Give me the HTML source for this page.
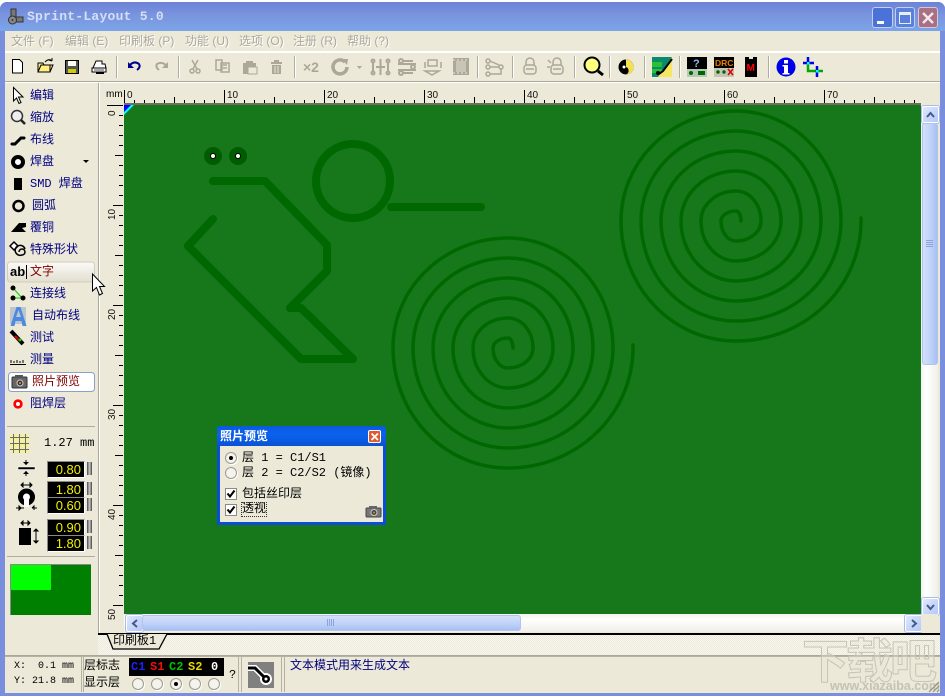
<!DOCTYPE html>
<html><head><meta charset="utf-8"><style>
html,body{margin:0;padding:0;width:945px;height:698px;overflow:hidden;background:#fff}
body{position:relative;font:12px/14px "Liberation Mono","WenQuanYi Zen Hei","Noto Sans CJK SC",monospace;color:#000}
.a{position:absolute}
.t{position:absolute;white-space:nowrap;line-height:14px;font-size:12px}
.n{color:#000080}
.m{color:#aca899;text-shadow:1px 1px 0 #fff;font-family:"Liberation Sans","WenQuanYi Zen Hei","Noto Sans CJK SC",sans-serif}
.sep{position:absolute;top:56px;width:1px;height:22px;background:#b0ad9f;border-right:1px solid #fff}
.ins{position:absolute;background:#000;color:#f0f000;font:13px/15px "Liberation Sans",sans-serif;text-align:right;left:47px;width:33px;height:15px;padding-right:3px;border:1px solid #fff;border-top-color:#888;border-left-color:#888}
.spin{position:absolute;left:87px;width:5px;height:13px;background:linear-gradient(90deg,#444,#ccc,#444)}
.rad{position:absolute;width:10px;height:10px;border-radius:50%;background:#f4f3ec;border:1px solid #9d9b90;box-shadow:1px 1px 0 #fff}
.rad.on::after{content:"";position:absolute;left:3px;top:3px;width:4px;height:4px;border-radius:50%;background:#000}
.chk{position:absolute;width:10px;height:10px;background:#fff;border:1px solid #8d8b80}
svg{position:absolute;overflow:visible}
.hbtn{position:absolute;width:15px;height:15px;border-radius:2px;background:linear-gradient(135deg,#dfe8fc,#b4c8f6);border:1px solid #fff;outline:1px solid #a8bcea}
</style></head><body>
<!-- window -->
<div class="a" style="left:0;top:2px;width:945px;height:694px;background:#7a8ede;border-radius:7px 7px 0 0"></div>
<div class="a" style="left:0;top:2px;width:945px;height:29px;background:linear-gradient(180deg,#6c82d8,#7a94de 45%,#7ba4e8);border-radius:7px 7px 0 0"></div>
<div class="a" style="left:5px;top:31px;width:935px;height:662px;background:#ece9d8"></div>
<!-- title -->
<svg style="left:8px;top:8px" width="16" height="17"><rect x="3" y="1" width="5" height="10" fill="#777" stroke="#333"/><rect x="7" y="9" width="8" height="5" fill="#777" stroke="#333"/><circle cx="4.500" cy="12" r="4" fill="#888" stroke="#333"/><circle cx="4.500" cy="12" r="1" fill="#333"/></svg>
<div class="t" style="left:27px;top:10px;color:#d4dff5;font-size:13px;font-weight:700;letter-spacing:.25px">Sprint-Layout 5.0</div>
<div class="a" style="left:872px;top:7px;width:19px;height:19px;background:#4a72d8;border:1px solid #c0d0f0;border-radius:3px"><div class="a" style="left:4px;top:13px;width:7px;height:3px;background:#fff"></div></div>
<div class="a" style="left:895px;top:7px;width:18px;height:19px;background:#5a80dc;border:1px solid #c0d0f0;border-radius:3px"><div class="a" style="left:3px;top:4px;width:10px;height:8px;border:1px solid #e8eefc;border-top-width:3px"></div></div>
<div class="a" style="left:918px;top:7px;width:18px;height:19px;background:#a86f85;border:1px solid #d8c8d0;border-radius:3px"><svg style="left:3px;top:4px" width="12" height="12"><path d="M1 1L11 11M11 1L1 11" stroke="#f4e8ec" stroke-width="2.400"/></svg></div>
<!-- menu -->
<div class="t m" style="left:11px;top:34px">文件 (F)</div>
<div class="t m" style="left:65px;top:34px">编辑 (E)</div>
<div class="t m" style="left:119px;top:34px">印刷板 (P)</div>
<div class="t m" style="left:185px;top:34px">功能 (U)</div>
<div class="t m" style="left:239px;top:34px">选项 (O)</div>
<div class="t m" style="left:293px;top:34px">注册 (R)</div>
<div class="t m" style="left:347px;top:34px">帮助 (?)</div>
<div class="a" style="left:5px;top:50px;width:935px;height:2px;background:#fff;border-top:1px solid #ece9d8"></div>
<div class="a" style="left:5px;top:81px;width:935px;height:1px;background:#aca899"></div>
<div class="a" style="left:5px;top:82px;width:935px;height:1px;background:#fff"></div>
<!-- toolbar separators -->
<div class="sep" style="left:116px"></div><div class="sep" style="left:178px"></div><div class="sep" style="left:294px"></div><div class="sep" style="left:477px"></div><div class="sep" style="left:512px"></div><div class="sep" style="left:574px"></div><div class="sep" style="left:609px"></div><div class="sep" style="left:644px"></div><div class="sep" style="left:679px"></div><div class="sep" style="left:768px"></div>
<!-- toolbar icons -->
<svg style="left:0;top:0" width="945" height="82">
<path d="M12.500 59.500h7l3 3v10.500h-10z" fill="#fff" stroke="#000"/>
<path d="M38 72V63h5l1 2h6v7zM38 72l3-7h12l-3 7z" fill="#ffee80" stroke="#000"/><path d="M45 62q4-4 7-1M52 61l-3-1M52 61v-3" stroke="#000" fill="none"/>
<rect x="65.500" y="60.500" width="13" height="13" fill="#555" stroke="#000"/><rect x="68" y="61" width="8" height="5" fill="#ffe"/><rect x="68" y="69" width="8" height="4" fill="#cc0"/>
<path d="M93 68l3-7h6v3h3l1 4zM92 68h14v4H92z" fill="#fff" stroke="#000"/><path d="M94 70h10" stroke="#555"/><rect x="96" y="72" width="8" height="2" fill="#000"/>
<path d="M129 66q5-6 10-2q2 3-2 6" stroke="#00008b" stroke-width="2" fill="none"/><path d="M128 62v6h6z" fill="#00008b"/>
<path d="M167 66q-5-5-10-2q-2 3 2 6" stroke="#aca899" stroke-width="2" fill="none"/><path d="M168 62v6h-6z" fill="#aca899"/>
<g stroke="#aca899" fill="none" stroke-width="1.500"><path d="M192 60l5 9M198 60l-5 9"/><circle cx="192" cy="71" r="2"/><circle cx="198" cy="71" r="2"/>
<path d="M216 60h6v10h-6zM221 63h8v9h-8z" fill="#ece9d8"/><path d="M223 65h4M223 68h4"/></g>
<path d="M243 63h3v-2h7v2h3v11h-13z" fill="#aca899"/><rect x="248" y="67" width="9" height="7" fill="#ece9d8" stroke="#aca899"/>
<path d="M271 62h11v2h-11zM272 65h9v9h-9zM274 60h5v2h-5z" fill="#aca899"/><path d="M275 66v7M278 66v7" stroke="#ece9d8"/>
<text x="303" y="72" font-family="Liberation Sans" font-weight="700" font-size="14" fill="#aca899">×2</text>
<path d="M345 62a7 7 0 1 0 2 5" stroke="#aca899" stroke-width="3.500" fill="none"/><path d="M342 59l6 0-1 6z" fill="#aca899"/><path d="M357 66h5l-2.500 3z" fill="#aca899"/>
<g stroke="#aca899" fill="none" stroke-width="2"><circle cx="373" cy="61" r="1.500"/><circle cx="373" cy="73" r="1.500"/><circle cx="388" cy="61" r="1.500"/><circle cx="388" cy="73" r="1.500"/><path d="M373 62v10M388 62v10M376 67h9M380.500 59v16"/>
<circle cx="401" cy="61" r="2"/><circle cx="413" cy="67" r="2"/><circle cx="401" cy="73" r="2"/><path d="M398 64h18M398 70h18M403 61h10M403 73h10"/></g>
<g stroke="#aca899" fill="none" stroke-width="1.500"><path d="M428 60h9v6h-9zM432 75l-7-4h14zM425 62v6M441 62v6"/></g>
<rect x="453" y="58" width="16" height="17" fill="#aca899"/><rect x="456" y="61" width="10" height="11" fill="#c8c5b6"/><path d="M453 60h16M453 73h16" stroke="#ece9d8" stroke-dasharray="2 2"/>
<g stroke="#aca899" fill="none" stroke-width="1.500"><circle cx="488" cy="61" r="2"/><circle cx="488" cy="67" r="2"/><circle cx="488" cy="74" r="2"/><circle cx="501" cy="67" r="2"/><path d="M490 61l9 4M490 67h9M490 74h11v-5"/>
<path d="M526 65v-3a4 4 0 0 1 8 0v3"/><rect x="524" y="65" width="12" height="9" rx="3"/><path d="M526 69h8"/>
<path d="M553 65v-3a4 4 0 0 1 8 0v3"/><rect x="551" y="65" width="12" height="9" rx="3"/><path d="M548 60l3 3M547 67h3M553 69h8"/></g>
<circle cx="592" cy="65" r="7.500" fill="#ffff80" stroke="#000" stroke-width="2"/><path d="M598 71l5 4" stroke="#000" stroke-width="3"/>
<circle cx="626" cy="67" r="7.500" fill="#000"/><path d="M626 59.500a7.500 7.500 0 0 1 0 15a4 4 0 0 0 0-7.500z" fill="#f5e050"/><circle cx="624" cy="67" r="1.500" fill="#fff"/>
<rect x="652" y="57" width="20" height="20" fill="#0c8a70"/><path d="M652 62h10v5h-10zM652 69h10v4h-10z" fill="#2ac030"/><path d="M672 57l-14 20h14z" fill="#f5e860"/><path d="M672 59l-9 12-4 3" stroke="#000" stroke-width="2" fill="none"/><circle cx="658" cy="73" r="2" fill="#000"/>
<rect x="687" y="57" width="20" height="20" fill="#000"/><rect x="687" y="69" width="20" height="8" fill="#b5c9b5"/><circle cx="691" cy="73" r="2" fill="#060"/><rect x="698" y="71" width="7" height="4" fill="#060"/>
<text x="693" y="67" font-family="Liberation Sans" font-weight="700" font-size="11" fill="#8fb8f0">?</text>
<rect x="714" y="57" width="20" height="20" fill="#000"/><rect x="714" y="68" width="20" height="9" fill="#c5c5b5"/>
<text x="715" y="66" font-family="Liberation Sans" font-weight="700" font-size="8.500" fill="#e88000">DRC</text>
<circle cx="718" cy="72" r="1.700" fill="#060"/><circle cx="724" cy="72" r="1.700" fill="#060"/><path d="M728 69l5 6M733 69l-5 6" stroke="#d00" stroke-width="1.500"/>
<path d="M745 57h4v2h4v-2h4v20h-12z" fill="#000"/><text x="746.500" y="71" font-family="Liberation Sans" font-weight="700" font-size="10" fill="#f00">M</text>
<circle cx="786" cy="67" r="9.500" fill="#0000e8"/><rect x="784" y="60" width="4" height="3.500" fill="#fff"/><path d="M782.500 65h5.500v8h1.500v1.500h-7V73h1.500v-6.500h-1.500z" fill="#fff"/>
<path d="M808 63v8h15" stroke="#0a0" stroke-width="2.500" fill="none"/><path d="M803 63h11M808 57v5M817 66v11" stroke="#0000e8" stroke-width="2.500" fill="none"/><rect x="807" y="62" width="2.500" height="2.500" fill="#0ff"/><rect x="816" y="70" width="2.500" height="2.500" fill="#0ff"/>
</svg>
<!-- sidebar edge -->
<div class="a" style="left:98px;top:83px;width:1px;height:551px;background:#aca899"></div>
<div class="a" style="left:99px;top:83px;width:1px;height:551px;background:#fff"></div>
<!-- ruler -->
<svg style="left:0;top:0" width="945" height="698">
<defs>
<pattern id="ph" x="124" y="0" width="100" height="698" patternUnits="userSpaceOnUse"><path d="M.5 90V104M50.500 97V104M10.500 100V104M20.500 100V104M30.500 100V104M40.500 100V104M60.500 100V104M70.500 100V104M80.500 100V104M90.500 100V104" stroke="#000" fill="none"/></pattern>
<pattern id="pv" x="0" y="105" width="698" height="100" patternUnits="userSpaceOnUse"><path d="M113 .5H123M115 50.500H123M119 10.500H123M119 20.500H123M119 30.500H123M119 40.500H123M119 60.500H123M119 70.500H123M119 80.500H123M119 90.500H123" stroke="#000" fill="none"/></pattern>
</defs>
<rect x="124" y="88" width="797" height="16" fill="url(#ph)"/>
<rect x="106" y="105" width="18" height="509" fill="url(#pv)"/>
<path d="M107 105.500H123" stroke="#000"/>
<g font-family="Liberation Sans" font-size="10" fill="#111"><text x="127" y="98">0</text><text x="227" y="98">10</text><text x="327" y="98">20</text><text x="427" y="98">30</text><text x="527" y="98">40</text><text x="627" y="98">50</text><text x="727" y="98">60</text><text x="827" y="98">70</text>
<text transform="translate(115,116) rotate(-90)">0</text><text transform="translate(115,220) rotate(-90)">10</text><text transform="translate(115,320) rotate(-90)">20</text><text transform="translate(115,420) rotate(-90)">30</text><text transform="translate(115,520) rotate(-90)">40</text><text transform="translate(115,620) rotate(-90)">50</text></g>
</svg>
<div class="t" style="left:106px;top:88px;font-size:10px;font-family:'Liberation Sans',sans-serif">mm</div>
<!-- canvas -->
<div class="a" style="left:124px;top:103px;width:797px;height:2px;background:#6e6e60"></div>
<svg style="left:124px;top:105px;overflow:hidden" width="797" height="509" viewBox="124 105 797 509">
<rect x="124" y="105" width="797" height="509" fill="#17781b"/>
<path d="M124 105h10l-10 10z" fill="#0ff"/><path d="M124 105h7l-7 7z" fill="#00f"/>
<g fill="none" stroke="#006800" stroke-width="8" stroke-linecap="round" stroke-linejoin="round">
<path d="M213 181H265L327 245V271L290 308H301L353 359H301L188 246L213 219"/>
<circle cx="353" cy="181" r="37"/>
<path d="M391 207H481"/>
</g>
<g fill="none" stroke="#006800" stroke-width="3.500">
<path transform="translate(508,348)" stroke-linecap="round" d="M5,0 A5,10 0 0 0 0,-10 A15,10 0 0 0 -15,0 A15,20 0 0 0 0,20 A25,20 0 0 0 25,0 A25,30 0 0 0 0,-30 A35,30 0 0 0 -35,0 A35,40 0 0 0 0,40 A45,40 0 0 0 45,0 A45,50 0 0 0 0,-50 A55,50 0 0 0 -55,0 A55,60 0 0 0 0,60 A65,60 0 0 0 65,0 A65,70 0 0 0 0,-70 A75,70 0 0 0 -75,0 A75,80 0 0 0 0,80 A85,80 0 0 0 85,0 A85,90 0 0 0 0,-90 A95,90 0 0 0 -95,0 A95,100 0 0 0 0,100 A105,100 0 0 0 105,0 A105,110 0 0 0 0,-110 A115,110 0 0 0 -115,0 A115,120 0 0 0 0,120 A125,120 0 0 0 125,0 L125,-3"/>
<path transform="translate(736,221)" stroke-linecap="round" d="M5,0 A5,10 0 0 0 0,-10 A15,10 0 0 0 -15,0 A15,20 0 0 0 0,20 A25,20 0 0 0 25,0 A25,30 0 0 0 0,-30 A35,30 0 0 0 -35,0 A35,40 0 0 0 0,40 A45,40 0 0 0 45,0 A45,50 0 0 0 0,-50 A55,50 0 0 0 -55,0 A55,60 0 0 0 0,60 A65,60 0 0 0 65,0 A65,70 0 0 0 0,-70 A75,70 0 0 0 -75,0 A75,80 0 0 0 0,80 A85,80 0 0 0 85,0 A85,90 0 0 0 0,-90 A95,90 0 0 0 -95,0 A95,100 0 0 0 0,100 A105,100 0 0 0 105,0 A105,110 0 0 0 0,-110 A115,110 0 0 0 -115,0 A115,120 0 0 0 0,120 A125,120 0 0 0 125,0 L125,-3"/>
</g>
<circle cx="213" cy="156" r="9" fill="#005c00"/><circle cx="238" cy="156" r="9" fill="#005c00"/>
<circle cx="213" cy="156" r="3" fill="#000"/><circle cx="238" cy="156" r="3" fill="#000"/><circle cx="213" cy="156" r="2" fill="#fff"/><circle cx="238" cy="156" r="2" fill="#fff"/>
</svg>
<!-- scrollbars -->
<div class="a" style="left:124px;top:614px;width:797px;height:18px;background:linear-gradient(180deg,#f4f3ee,#fff 30%,#f0efe8)"></div>
<div class="hbtn" style="left:126px;top:615px"><svg style="left:4px;top:3px" width="8" height="9"><path d="M6 1L2 4.500L6 8" stroke="#44598f" stroke-width="2" fill="none"/></svg></div>
<div class="a" style="left:142px;top:615px;width:377px;height:14px;background:linear-gradient(180deg,#d5e0fb,#bcd0f8 60%,#a8c0f0);border:1px solid #b0c4ee;border-radius:3px"></div>
<svg style="left:327px;top:619px" width="8" height="8"><path d="M.5 0V7M2.500 0V7M4.500 0V7M6.500 0V7" stroke="#8aa4de"/></svg>
<div class="hbtn" style="left:905px;top:615px"><svg style="left:4px;top:3px" width="8" height="9"><path d="M2 1L6 4.500L2 8" stroke="#44598f" stroke-width="2" fill="none"/></svg></div>
<div class="a" style="left:921px;top:105px;width:17px;height:509px;background:linear-gradient(90deg,#f4f3ee,#fff 30%,#f0efe8)"></div>
<div class="hbtn" style="left:922px;top:106px"><svg style="left:3px;top:4px" width="9" height="8"><path d="M1 6L4.500 2L8 6" stroke="#44598f" stroke-width="2" fill="none"/></svg></div>
<div class="a" style="left:922px;top:123px;width:14px;height:240px;background:linear-gradient(90deg,#d5e0fb,#bcd0f8 60%,#a8c0f0);border:1px solid #b0c4ee;border-radius:3px"></div>
<svg style="left:926px;top:240px" width="8" height="8"><path d="M0 .5H7M0 2.500H7M0 4.500H7M0 6.500H7" stroke="#8aa4de"/></svg>
<div class="hbtn" style="left:922px;top:598px"><svg style="left:3px;top:4px" width="9" height="8"><path d="M1 2L4.500 6L8 2" stroke="#44598f" stroke-width="2" fill="none"/></svg></div>
<div class="a" style="left:921px;top:614px;width:17px;height:18px;background:#ece9d8"></div>
<!-- tab strip -->
<div class="a" style="left:98px;top:633px;width:842px;height:22px;background:repeating-conic-gradient(#ece9d8 0 25%,#f8f7f1 0 50%) 0 0/2px 2px"></div>
<div class="a" style="left:98px;top:633px;width:842px;height:2px;background:#000"></div>
<svg style="left:98px;top:633px" width="80" height="22"><path d="M9 1L15 16H61L69 1z" fill="#ece9d8"/><path d="M9 1L15 16H61L69 1" stroke="#000" fill="none" stroke-width="1.300"/></svg>
<div class="t" style="left:113px;top:634px">印刷板1</div>
<div class="a" style="left:5px;top:655px;width:935px;height:1px;background:#aca899"></div>
<!-- sidebar items -->
<svg style="left:0;top:0" width="98" height="640">
<path d="M13.500 87.500V101L16.500 98L19 103.500L21 102.500L18.500 97H23z" fill="#fff" stroke="#000"/>
<circle cx="17" cy="116" r="5.500" fill="#eee" stroke="#333" stroke-width="1.500"/><path d="M21 120l4 4" stroke="#222" stroke-width="2.500"/>
<path d="M12 144h3l6-6h3" stroke="#000" stroke-width="3" fill="none" stroke-linecap="round"/>
<circle cx="18" cy="162" r="5" fill="#fff" stroke="#000" stroke-width="4"/><path d="M83 160h6l-3 3z" fill="#000"/>
<rect x="14" y="178" width="8" height="12" fill="#000"/>
<circle cx="18.500" cy="206" r="5" fill="none" stroke="#000" stroke-width="2.500"/>
<path d="M11 232l8-9h7v4l-4 1 4 4z" fill="#000"/>
<path d="M14 242l4 4-4 4-4-4z" fill="#fff" stroke="#000" stroke-width="1.500"/><path d="M19 252a3 3 0 1 1 3 3a5 5 0 1 1 3-6" fill="none" stroke="#000" stroke-width="1.500"/>
<linearGradient id="hb" x1="0" y1="0" x2="0" y2="1"><stop offset="0" stop-color="#fbfaf7"/><stop offset="1" stop-color="#e2dfcf"/></linearGradient>
<rect x="7.500" y="262" width="87" height="20" rx="3" fill="url(#hb)" stroke="#d0cdbd"/>
<path d="M26.500 265V279" stroke="#000"/>
<path d="M13 288l9 10M13 298h10" fill="none" stroke="#0c0"/><circle cx="13" cy="288" r="2.500" fill="#000"/><circle cx="13" cy="298" r="2.500" fill="#000"/><circle cx="23" cy="298" r="2.500" fill="#000"/>
<rect x="10" y="307" width="16" height="17" fill="#c0c4cc"/>
<path d="M10.500 326l6-19h4l6 19h-4l-1-5h-6l-1 5zM16 317h5l-2.500-7z" fill="#4a8ae0" fill-rule="evenodd"/>
<path d="M11 331l12 13" stroke="#000" stroke-width="4"/><path d="M15 336l4 4" stroke="#d00" stroke-width="2"/><circle cx="20" cy="340" r="1.500" fill="#0c0"/>
<path d="M10 364.500H26M11 363v-3M14 363v-2M17 363v-3M20 363v-2M23 363v-3" stroke="#000" fill="none"/>
<rect x="8.500" y="372.500" width="86" height="19" rx="3" fill="#fff" stroke="#8aa0c8"/>
<rect x="12" y="377" width="15" height="11" rx="1" fill="#666" stroke="#333"/><rect x="15" y="375" width="8" height="3" fill="#555"/><circle cx="20" cy="383" r="3" fill="#333" stroke="#ccc"/><circle cx="20" cy="383" r="1" fill="#e8a020"/>
<circle cx="18" cy="404" r="5" fill="#f00" stroke="#fff" stroke-width=".5"/><circle cx="18" cy="404" r="2" fill="#fff"/>
<!-- cursor -->
<path d="M92.500 274V291L96.500 287.500L99.500 295L102.500 293.500L99.500 286.500H104.500z" fill="#fff" stroke="#000"/>
<!-- separators -->
<path d="M7 426.500H95M7 556.500H95" stroke="#b0ad9f"/>
<!-- grid -->
<rect x="10" y="434" width="19" height="19" fill="#f5f0a0"/><path d="M10 437.500H29M10 443.500H29M10 449.500H29M13.500 434V453M19.500 434V453M25.500 434V453" stroke="#6a6a6a"/>
<!-- track width -->
<rect x="18" y="467" width="17" height="2.500" fill="#000" stroke="#fff" stroke-width=".5"/><path d="M23 462h6l-3 3zM23 474h6l-3-3z" fill="#000"/><path d="M26 460v5M26 471v5" stroke="#000"/>
<!-- pad -->
<circle cx="26.500" cy="497" r="6" fill="#fff" stroke="#000" stroke-width="5"/><rect x="24" y="499" width="5" height="8" fill="#fff"/>
<path d="M21 485h11M21 485l2-2v4zM32 485l-2-2v4zM16 508h8M32 508h5M21 508l-2-2v4zM32 508l2-2v4M26 483v0" stroke="#000" fill="none"/>
<!-- smd -->
<rect x="19" y="528" width="12" height="17" fill="#000"/><path d="M21 523h9M21 523l2-2v4zM30 523l-2-2v4zM36 529v14M36 529l-2 2h4zM36 543l-2-2h4z" stroke="#000" fill="none"/>
</svg>
<div class="t n" style="left:30px;top:89px">编辑</div>
<div class="t n" style="left:30px;top:111px">缩放</div>
<div class="t n" style="left:30px;top:133px">布线</div>
<div class="t n" style="left:30px;top:155px">焊盘</div>
<div class="t n" style="left:30px;top:177px">SMD 焊盘</div>
<div class="t n" style="left:32px;top:199px">圆弧</div>
<div class="t n" style="left:30px;top:221px">覆铜</div>
<div class="t n" style="left:30px;top:243px">特殊形状</div>
<div class="t" style="left:10px;top:265px;font:700 13px/14px 'Liberation Sans',sans-serif">ab</div>
<div class="t" style="left:30px;top:265px;color:#800000">文字</div>
<div class="t n" style="left:30px;top:287px">连接线</div>
<div class="t n" style="left:32px;top:309px">自动布线</div>
<div class="t n" style="left:30px;top:331px">测试</div>
<div class="t n" style="left:30px;top:353px">测量</div>
<div class="t" style="left:32px;top:375px;color:#800000">照片预览</div>
<div class="t n" style="left:30px;top:397px">阻焊层</div>
<!-- values -->
<div class="t" style="left:44px;top:436px">1.27 mm</div>
<div class="ins" style="top:461px">0.80</div><div class="spin" style="top:462px"></div>
<div class="ins" style="top:481px">1.80</div><div class="spin" style="top:482px"></div>
<div class="ins" style="top:497px">0.60</div><div class="spin" style="top:498px"></div>
<div class="ins" style="top:519px">0.90</div><div class="spin" style="top:520px"></div>
<div class="ins" style="top:535px">1.80</div><div class="spin" style="top:536px"></div>
<!-- thumbnail -->
<div class="a" style="left:10px;top:564px;width:81px;height:51px;background:#008000;border-left:1px solid #888;border-top:1px solid #888;box-sizing:border-box"></div>
<div class="a" style="left:11px;top:565px;width:40px;height:25px;background:#00ff00"></div>
<!-- dialog -->
<div class="a" style="left:217px;top:426px;width:169px;height:99px;background:#0a4ed8;border-radius:3px 3px 0 0"></div>
<div class="a" style="left:217px;top:426px;width:169px;height:21px;background:linear-gradient(180deg,#0a5ae0,#0a62ee 40%,#0a50d0);border-radius:3px 3px 0 0"></div>
<div class="a" style="left:220px;top:446px;width:163px;height:76px;background:#ece9d8"></div>
<div class="t" style="left:220px;top:430px;color:#fff;font-weight:700">照片预览</div>
<div class="a" style="left:368px;top:430px;width:11px;height:11px;background:#e05a30;border:1px solid #fff;border-radius:2px"><svg style="left:2px;top:2px" width="8" height="8"><path d="M.5 .5L7 7M7 .5L.5 7" stroke="#fff" stroke-width="1.800"/></svg></div>
<div class="rad on" style="left:225px;top:452px"></div>
<div class="t" style="left:242px;top:451px">层 1 = C1/S1</div>
<div class="rad" style="left:225px;top:467px"></div>
<div class="t" style="left:242px;top:466px">层 2 = C2/S2 (镜像)</div>
<div class="chk" style="left:225px;top:488px"></div>
<svg style="left:226px;top:489px" width="10" height="10"><path d="M1.500 4.500L4 7.500L8.500 1.500" stroke="#000" stroke-width="2" fill="none"/></svg>
<div class="t" style="left:242px;top:487px">包括丝印层</div>
<div class="chk" style="left:225px;top:504px"></div>
<svg style="left:226px;top:505px" width="10" height="10"><path d="M1.500 4.500L4 7.500L8.500 1.500" stroke="#000" stroke-width="2" fill="none"/></svg>
<div class="t" style="left:242px;top:503px;outline:1px dotted #333;line-height:13px">透视</div>
<svg style="left:365px;top:505px" width="17" height="13"><rect x="1" y="3" width="15" height="9" rx="1" fill="#777" stroke="#444"/><rect x="4" y="1" width="8" height="3" fill="#666"/><circle cx="9" cy="7.500" r="3" fill="#444" stroke="#ccc"/><circle cx="9" cy="7.500" r="1" fill="#d89020"/></svg>
<!-- status -->
<svg style="left:0;top:0" width="945" height="698"><path d="M81.500 656.500V692M83.500 656.500V692M238.500 656.500V692M241.500 656.500V692M281.500 656.500V692M284.500 656.500V692" stroke="#b5b2a2" fill="none"/><path d="M5 656.500H940" stroke="#b5b2a2"/></svg>
<div class="t" style="left:14px;top:660px;font-size:10px">X:</div><div class="t" style="left:38px;top:660px;font-size:10px">0.1</div><div class="t" style="left:62px;top:660px;font-size:10px">mm</div>
<div class="t" style="left:14px;top:675px;font-size:10px">Y:</div><div class="t" style="left:32px;top:675px;font-size:10px">21.8</div><div class="t" style="left:62px;top:675px;font-size:10px">mm</div>
<div class="t" style="left:84px;top:659px">层标志</div>
<div class="t" style="left:84px;top:676px">显示层</div>
<div class="a" style="left:129px;top:658px;width:95px;height:18px;background:#000"></div>
<div class="t" style="left:131px;top:660px;color:#2020ff;font-weight:700">C1</div>
<div class="t" style="left:150px;top:660px;color:#f01010;font-weight:700">S1</div>
<div class="t" style="left:169px;top:660px;color:#00c000;font-weight:700">C2</div>
<div class="t" style="left:188px;top:660px;color:#e8d800;font-weight:700">S2</div>
<div class="t" style="left:211px;top:660px;color:#fff;font-weight:700">0</div>
<div class="rad" style="left:132px;top:678px"></div><div class="rad" style="left:151px;top:678px"></div><div class="rad on" style="left:170px;top:678px"></div><div class="rad" style="left:189px;top:678px"></div><div class="rad" style="left:208px;top:678px"></div>
<div class="t" style="left:229px;top:668px">?</div>
<svg style="left:248px;top:662px" width="26" height="26"><rect width="26" height="26" fill="#808080"/><path d="M0 6h7l10 10" stroke="#fff" stroke-width="6" fill="none"/><circle cx="18" cy="17" r="6" fill="#fff"/><path d="M0 6h7l10 10" stroke="#000" stroke-width="3" fill="none"/><circle cx="18" cy="17" r="4" fill="#000"/><circle cx="18" cy="17" r="1.500" fill="#fff"/></svg>
<div class="t n" style="left:290px;top:659px">文本模式用来生成文本</div>
<!-- watermark -->
<div class="t" style="left:802px;top:630px;font:700 47px/56px 'Noto Sans CJK SC','WenQuanYi Zen Hei',sans-serif;color:rgba(236,233,216,.35);-webkit-text-stroke:1px #c6c4b7;letter-spacing:-3px">下载吧</div>
<div class="t" style="left:830px;top:680px;font:700 12.500px/13px 'Liberation Sans',sans-serif;color:#c4c2b4">www.xiazaiba.com</div>
<svg style="left:928px;top:680px" width="12" height="13"><path d="M1 12L11 2M5 12L11 6M9 12L11 10" stroke="#9a9888" stroke-width="1.300"/></svg>
</body></html>
